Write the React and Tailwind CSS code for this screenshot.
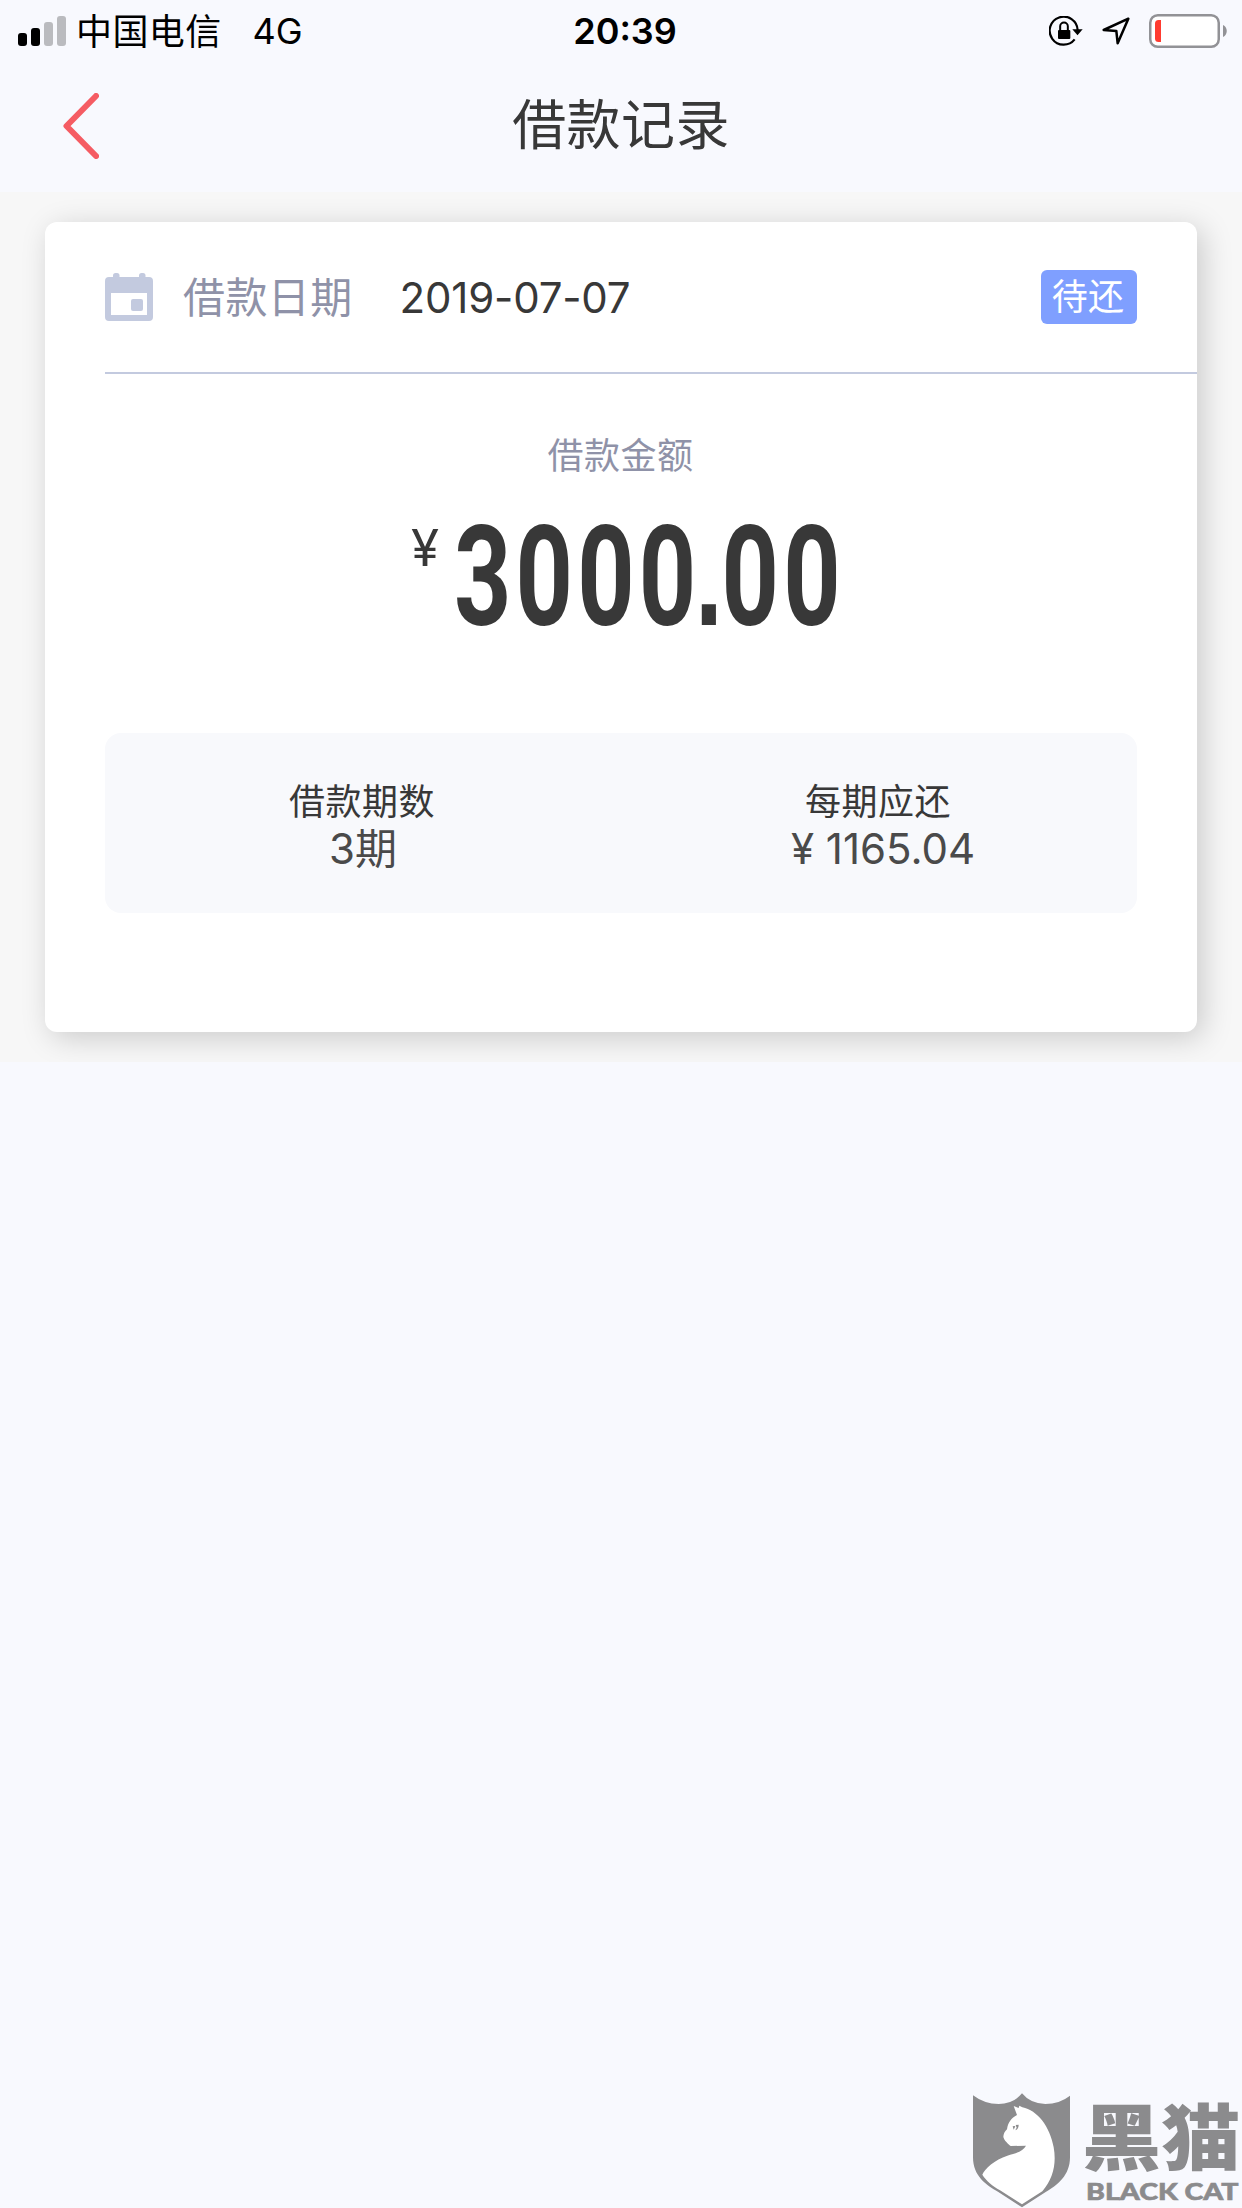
const record = {
  date: '2019-07-07',
  status: '待还',
  amount: '3000.00',
  periods: [
    { label: '借款期数', value: '3期' },
    { label: '每期应还', value: '¥ 1165.04' }
  ]
};

const SignalBars = () => (
  <svg className="w-12 h-[30px]" viewBox="0 0 48 30">
    <rect x="0" y="17" width="9" height="13" rx="3" fill="#000" />
    <rect x="13" y="12" width="9" height="18" rx="3" fill="#000" />
    <rect x="26" y="6" width="9" height="24" rx="3" fill="#babbbf" />
    <rect x="39" y="0" width="9" height="30" rx="3" fill="#babbbf" />
  </svg>
);

const RotationLock = () => (
  <svg className="w-[34px] h-[30px]" viewBox="0 0 102 90">
    <path d="M77 70A42 42 0 1 1 86 42" fill="none" stroke="#000" strokeWidth="6.5" />
    <path d="M70 40h31L85.500 58z" fill="#000" />
    <path d="M33.500 44V31a11.500 11.500 0 0 1 23 0v13" fill="none" stroke="#000" strokeWidth="6" />
    <rect x="27" y="42" width="37" height="27" rx="3" fill="#000" />
  </svg>
);

const LocationArrow = () => (
  <svg className="w-[28px] h-[28px]" viewBox="0 0 84 84">
    <path d="M79 5L5 39L43 42L47 79Z" fill="none" stroke="#000" strokeWidth="7.5" strokeLinejoin="round" />
  </svg>
);

const Battery = () => (
  <svg className="w-[78px] h-[34px]" viewBox="0 0 78 34">
    <rect x="1.250" y="1.250" width="68.500" height="31.500" rx="7.500" fill="#fff" stroke="#929296" strokeWidth="2.500" />
    <path d="M12 6v22H9.500A3.500 3.500 0 0 1 6 24.500V9.500A3.500 3.500 0 0 1 9.500 6z" fill="#ff3b30" />
    <path d="M74 11c5 2 5 10 0 12z" fill="#929296" />
  </svg>
);

const CalendarIcon = () => (
  <svg className="w-12 h-12" viewBox="0 0 48 48" fill="#c3cadf">
    <rect x="8" y="0" width="6.500" height="10" rx="2.500" />
    <rect x="34" y="0" width="6.500" height="10" rx="2.500" />
    <path fillRule="evenodd" d="M4 4h40a4 4 0 0 1 4 4v36a4 4 0 0 1-4 4H4a4 4 0 0 1-4-4V8a4 4 0 0 1 4-4zM6 20v22h36V20z" />
    <rect x="26" y="26" width="12" height="12" rx="2" />
  </svg>
);

const CatShield = () => (
  <svg className="w-[97px] h-[115px]" viewBox="69 69 291 345">
    <path
      d="M69 76Q103 102 146 102Q191 101 216 70Q241 101 286 102Q328 102 360 77V262C360 316 323 346 287 366L216 412L145 366C108 345 69 318 69 262Z"
      fill="#8b8b8d"
    />
    <path
      d="M191 108L206 114L208 107L217 112C262 121 300 170 311 232C320 282 309 326 277 364L216 403L150 361C128 348 108 332 97 314C103 297 135 268 172 257C199 250 220 243 228 227L182 228C174 222 163 212 160 201C160 193 164 184 171 178C174 157 184 144 201 135Z"
      fill="#fff"
    />
    <path d="M188 169Q193 167 196 169L191 179zM197 165L206 164Q206 177 196 181L200 173z" fill="#8b8b8d" />
  </svg>
);

const StatusBar = () => (
  <div className="grid grid-cols-3 items-center h-[62px] text-[36px] leading-none text-black">
    <div className="flex items-center pl-[18px]">
      <SignalBars />
      <span className="ml-[10px] mt-[2px] tracking-[0.4px]">中国电信</span>
      <span className="ml-[31px]">4G</span>
    </div>
    <div className="text-center font-semibold pl-[8px]">20:39</div>
    <div className="flex items-center justify-end pr-[15px]">
      <RotationLock />
      <div className="ml-[19px]"><LocationArrow /></div>
      <div className="ml-[19px]"><Battery /></div>
    </div>
  </div>
);

const Header = () => (
  <div className="grid grid-cols-3 items-center h-[130px] pb-[2px]">
    <button className="pl-[63px]" aria-label="返回">
      <svg className="w-9 h-[66px]" viewBox="0 0 36 66">
        <path d="M33 3L3.500 33L33 63" fill="none" stroke="#f55c63" strokeWidth="6" strokeLinecap="round" strokeLinejoin="round" />
      </svg>
    </button>
    <h1 className="text-center text-[54px] leading-none tracking-[0.4px] text-[#383838] whitespace-nowrap">借款记录</h1>
  </div>
);

const Amount = ({ value }) => {
  const [whole, cents] = value.split('.');
  return (
    <span className="origin-left scale-x-[0.715] font-[Roboto] font-bold text-[140px] leading-[142px] tracking-[5.8px] whitespace-nowrap">
      {whole}
      <span className="font-['Liberation_Sans'] -mx-[7.5px]">.</span>
      {cents}
    </span>
  );
};

const RecordCard = ({ date, status, amount, periods }) => (
  <div className="h-[810px] bg-white rounded-xl shadow-[6px_6px_30px_rgba(0,0,0,0.18)]">
    <div className="ml-[60px] pr-[60px] h-[152px] flex items-center border-b-2 border-[#c3cadf]">
      <CalendarIcon />
      <span className="ml-[30px] mt-px text-[42px] leading-none tracking-[0.4px] text-[#8f92a8]">借款日期</span>
      <span className="ml-[47px] mt-px text-[42px] leading-none tracking-[-0.2px] text-[#383838]">{date}</span>
      <span className="ml-auto w-24 h-[54px] rounded-md bg-[#7f9fff] text-white text-[36px] leading-[54px] tracking-[0.3px] text-center pr-[2px]">
        {status}
      </span>
    </div>

    <div className="h-[359px] pt-[62px] text-center">
      <p className="text-[36px] leading-[40px] tracking-[0.5px] pr-px text-[#8f92a8]">借款金额</p>
      <div className="mt-[30px] pl-[10px] flex items-start justify-center text-[#383838]">
        <span className="mt-[16px] w-[43px] text-left text-[51px] leading-none">¥</span>
        <span className="w-[387px] h-[142px] flex">
          <Amount value={amount} />
        </span>
      </div>
    </div>

    <div className="mx-[60px] h-[180px] grid grid-cols-2 rounded-2xl bg-[#f8f9fc] text-center pt-[46px]">
      {periods.map((p) => (
        <div key={p.label}>
          <p className="text-[36px] leading-[46px] tracking-[0.5px] pr-[2px] text-[#383838]">{p.label}</p>
          <p className={`text-[42px] leading-[48px] text-[#4a4a4a] ${p.value.startsWith('¥') ? 'pl-2' : ''}`}>{p.value}</p>
        </div>
      ))}
    </div>
  </div>
);

const Watermark = () => (
  <div className="absolute right-0 bottom-0 w-[269px] h-[115px] flex text-[#8b8b8d]">
    <CatShield />
    <div className="ml-[16px] w-[156px] whitespace-nowrap">
      <div className="-ml-[4px] w-[144px] h-[82px] origin-left scale-x-[1.1] font-['Noto_Sans_CJK_SC'] font-black text-[72px] leading-[80px]">黑猫</div>
      <div className="w-[131px] origin-left scale-x-[1.24] font-[Lato] font-black text-[23px] leading-[32px] [-webkit-text-stroke:0.6px_#8b8b8d]">BLACK CAT</div>
    </div>
  </div>
);

export default function App() {
  return (
    <div className="relative w-[1242px] h-[2208px] overflow-hidden bg-[#f8f9fe] font-['Inter','Noto_Sans_CJK_SC',sans-serif]">
      <StatusBar />
      <Header />
      <div className="h-[870px] overflow-hidden bg-[#f7f7f7] px-[45px] pt-[30px]">
        <RecordCard {...record} />
      </div>
      <Watermark />
    </div>
  );
}
